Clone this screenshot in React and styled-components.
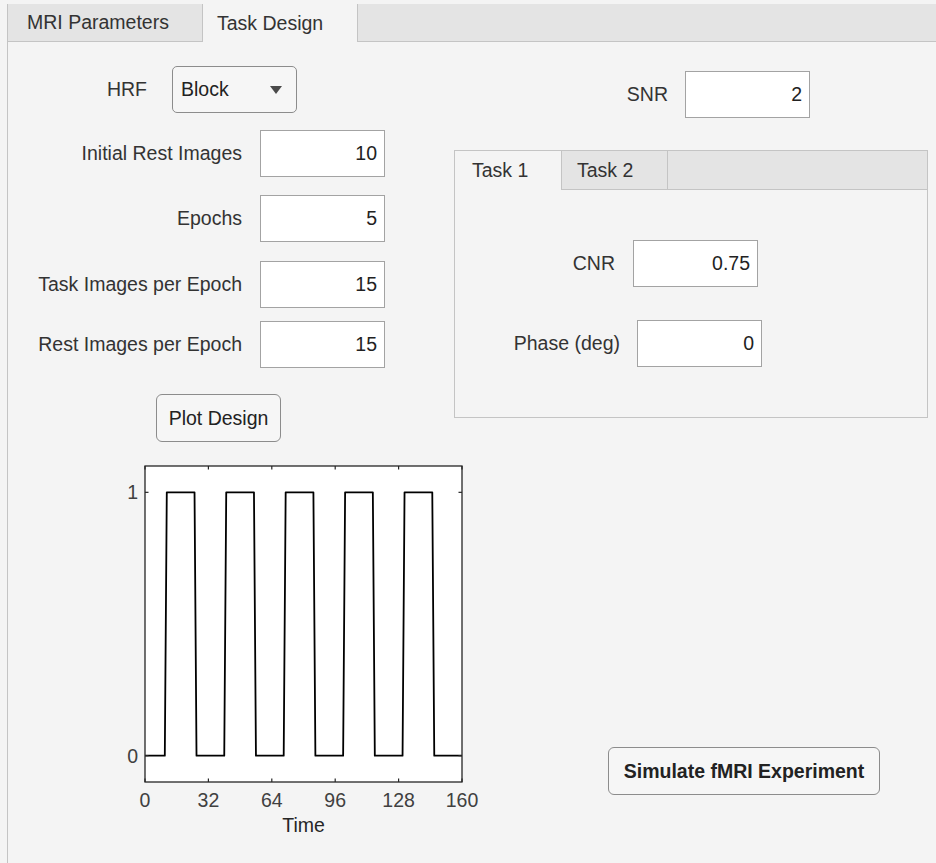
import React from 'react'
import styled, { createGlobalStyle } from 'styled-components'

const GlobalStyle = createGlobalStyle`
  body {
    margin: 0;
    background: #f4f4f4;
    font-family: "Liberation Sans", Arial, sans-serif;
    font-size: 19.5px;
    color: #333;
  }
`

const Window = styled.div`
  height: 863px;
  box-sizing: border-box;
  padding: 4px 0 0 7px;
  overflow: hidden;
`

const TabGroup = styled.div`
  height: 100%;
  border-left: 1px solid #c4c4c4;
`

const TabBar = styled.div`
  display: flex;
  height: ${p => p.$h}px;
  box-sizing: border-box;
  background: #e4e4e4;
  border-bottom: 1px solid #c4c4c4;
`

const Tab = styled.div`
  display: flex;
  align-items: center;
  width: ${p => p.$w}px;
  box-sizing: border-box;
  padding-left: ${p => p.$pad}px;
  white-space: nowrap;
  color: #333;
  background: ${p => (p.$active ? '#f4f4f4' : 'transparent')};
  margin-bottom: ${p => (p.$active ? '-1px' : '0')};
  border-left: ${p => (p.$left ? '1px solid #c4c4c4' : 'none')};
  border-right: ${p => (p.$right ? '1px solid #c4c4c4' : 'none')};
`

const Content = styled.div`
  display: grid;
  grid-template-columns: 446px 1fr;
`

const Column = styled.div`
  display: flex;
  flex-direction: column;
  align-items: flex-start;
`

const Row = styled.div`
  display: flex;
  align-items: center;
  margin-top: ${p => p.$mt}px;
`

const Label = styled.label`
  width: ${p => p.$w}px;
  margin-right: ${p => p.$gap}px;
  text-align: right;
  white-space: nowrap;
`

const NumberField = styled.input`
  width: 125px;
  height: 47px;
  box-sizing: border-box;
  border: 1px solid #a3a3a3;
  background: #fff;
  padding: 0 7px 0 0;
  text-align: right;
  font: inherit;
  color: #222;
  outline: none;
`

const Dropdown = styled.div`
  display: flex;
  align-items: center;
  justify-content: space-between;
  width: 125px;
  height: 47px;
  box-sizing: border-box;
  padding: 0 14px 0 8px;
  border: 1px solid #8c8c8c;
  border-radius: 5px;
  background: #f6f6f6;
  color: #222;
`

const Caret = styled.span`
  width: 0;
  height: 0;
  border-left: 6px solid transparent;
  border-right: 6px solid transparent;
  border-top: 8px solid #4a4a4a;
`

const Button = styled.button`
  margin-top: ${p => p.$mt}px;
  margin-left: ${p => p.$ml}px;
  width: ${p => p.$w}px;
  height: 48px;
  border: 1px solid #8c8c8c;
  border-radius: 6px;
  background: #f6f6f6;
  font: inherit;
  font-weight: ${p => (p.$bold ? 700 : 400)};
  color: #222;
  padding: 0;
`

const InnerTabs = styled.div`
  margin-top: 32px;
  width: 474px;
  height: 268px;
  box-sizing: border-box;
  border: 1px solid #c4c4c4;
`

const Plot = styled.svg`
  display: block;
  margin-top: 10px;
  margin-left: 92px;
`

// axes box in svg coordinates
const X0 = 45
const X1 = 362
const YT = 14
const YB = 330
const sx = t => X0 + (t / 160) * (X1 - X0)
const sy = v => YB - ((v + 0.1) / 1.2) * (YB - YT)

const signal = Array.from({ length: 161 }, (_, t) =>
  t >= 11 && (t - 11) % 30 < 15 ? 1 : 0
)

function DesignPlot() {
  const pts = signal.map((v, t) => `${sx(t).toFixed(2)},${sy(v).toFixed(2)}`).join(' ')
  const xticks = [0, 32, 64, 96, 128, 160]
  const yticks = [0, 1]
  const axis = '#262626'
  return (
    <Plot width="380" height="392" viewBox="0 0 380 392">
      <rect x={X0} y={YT} width={X1 - X0} height={YB - YT} fill="#fff" />
      <polyline points={pts} fill="none" stroke="#000" strokeWidth="1.8" strokeLinejoin="round" />
      <rect x={X0} y={YT} width={X1 - X0} height={YB - YT} fill="none" stroke={axis} strokeWidth="1.3" />
      {xticks.map(t => (
        <g key={t}>
          <line x1={sx(t)} x2={sx(t)} y1={YB} y2={YB - 3.5} stroke={axis} strokeWidth="1.2" />
          <line x1={sx(t)} x2={sx(t)} y1={YT} y2={YT + 3.5} stroke={axis} strokeWidth="1.2" />
          <text x={sx(t)} y="355" textAnchor="middle" fontFamily="Liberation Sans, Arial, sans-serif" fontSize="19.5" fill="#404040">{t}</text>
        </g>
      ))}
      {yticks.map(v => (
        <g key={v}>
          <line x1={X0} x2={X0 + 3.5} y1={sy(v)} y2={sy(v)} stroke={axis} strokeWidth="1.2" />
          <line x1={X1} x2={X1 - 3.5} y1={sy(v)} y2={sy(v)} stroke={axis} strokeWidth="1.2" />
          <text x="38" y={sy(v) + 7} textAnchor="end" fontFamily="Liberation Sans, Arial, sans-serif" fontSize="19.5" fill="#404040">{v}</text>
        </g>
      ))}
      <text x={(X0 + X1) / 2} y="380" textAnchor="middle" fontFamily="Liberation Sans, Arial, sans-serif" fontSize="19.5" fill="#262626">Time</text>
    </Plot>
  )
}

function Field({ label, value, w, gap, mt }) {
  return (
    <Row $mt={mt}>
      <Label $w={w} $gap={gap}>{label}</Label>
      <NumberField readOnly value={value} />
    </Row>
  )
}

export default function App() {
  return (
    <>
      <GlobalStyle />
      <Window>
        <TabGroup>
          <TabBar $h={38}>
            <Tab $w={194} $pad={19}>MRI Parameters</Tab>
            <Tab $w={156} $pad={14} $active $left $right>Task Design</Tab>
          </TabBar>

          <Content>
            <Column>
              <Row $mt={24}>
                <Label $w={139} $gap={25}>HRF</Label>
                <Dropdown>
                  <span>Block</span>
                  <Caret />
                </Dropdown>
              </Row>
              <Field label="Initial Rest Images" value="10" w={234} gap={18} mt={17} />
              <Field label="Epochs" value="5" w={234} gap={18} mt={18} />
              <Field label="Task Images per Epoch" value="15" w={234} gap={18} mt={19} />
              <Field label="Rest Images per Epoch" value="15" w={234} gap={18} mt={13} />
              <Button $mt={26} $ml={148} $w={125}>Plot Design</Button>
              <DesignPlot />
            </Column>

            <Column>
              <Field label="SNR" value="2" w={214} gap={17} mt={29} />
              <InnerTabs>
                <TabBar $h={39}>
                  <Tab $w={107} $pad={17} $active $right>Task 1</Tab>
                  <Tab $w={106} $pad={15} $right>Task 2</Tab>
                </TabBar>
                <Field label="CNR" value="0.75" w={160} gap={18} mt={50} />
                <Field label="Phase (deg)" value="0" w={165} gap={17} mt={33} />
              </InnerTabs>
              <Button $mt={329} $ml={154} $w={272} $bold>Simulate fMRI Experiment</Button>
            </Column>
          </Content>
        </TabGroup>
      </Window>
    </>
  )
}
